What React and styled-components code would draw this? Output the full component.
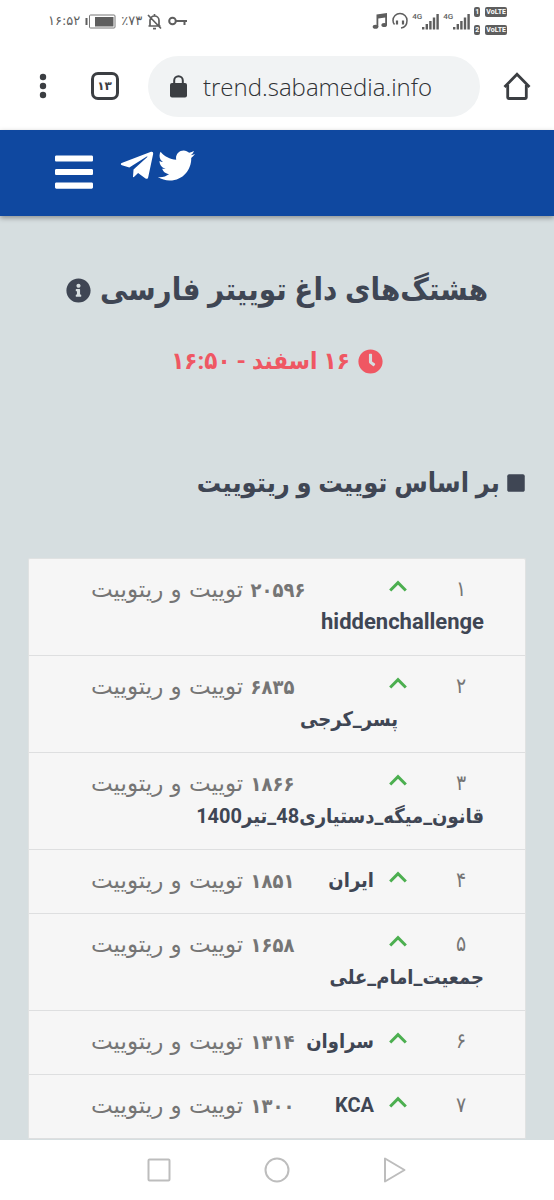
import React from "react";
import styled, { createGlobalStyle } from "styled-components";
import { FaBars, FaTelegramPlane, FaTwitter, FaInfoCircle, FaClock, FaSquare } from "react-icons/fa";

const GlobalStyle = createGlobalStyle`
  * { box-sizing: border-box; }
  body {
    margin: 0;
    background: #d6dee0;
    font-family: Roboto, "DejaVu Sans Condensed", "DejaVu Sans", sans-serif;
    color: #3f4654;
  }
  button { border: 0; padding: 0; background: none; color: inherit; font: inherit; cursor: pointer; }
  a { color: inherit; text-decoration: none; }
  svg { display: block; flex: none; }
`;

const Screen = styled.div`
  display: flex;
  flex-direction: column;
  min-height: 100vh;
`;

const StatusBar = styled.div`
  display: flex;
  justify-content: space-between;
  align-items: center;
  height: 42px;
  padding: 0 47px 0 48px;
  background: #fff;
  color: #5e5e5e;
`;

const StatusGroup = styled.div`
  display: flex;
  align-items: center;
  gap: ${(p) => p.$gap}px;
`;

const StatusText = styled.span`
  font-family: "DejaVu Sans", sans-serif;
  font-size: 13px;
  line-height: 16px;
`;

const Signal = styled.span`
  display: flex;
  align-items: flex-start;
  height: 18px;
`;

const Network = styled.span`
  font-size: 8px;
  font-weight: 500;
  line-height: 10px;
`;

const SimColumn = styled.span`
  display: grid;
  grid-template-columns: auto auto;
  align-items: center;
  gap: 8px 5px;
`;

const Badge = styled.span`
  padding: 0 1px;
  border-radius: 2px;
  background: #5e5e5e;
  color: #fff;
  font-size: 7px;
  font-weight: 700;
  line-height: 10px;
  text-align: center;
`;

const Toolbar = styled.div`
  display: grid;
  grid-template-columns: 86px 37px minmax(0, 1fr) 74px;
  align-items: center;
  justify-items: center;
  height: 88px;
  background: #fff;
  color: #3b3e42;
`;

const TabButton = styled.button`
  width: 28px;
  height: 28px;
  border: 3px solid #3b3e42;
  border-radius: 7px;
  font-family: "DejaVu Sans", sans-serif;
  font-size: 12px;
  font-weight: 700;
  line-height: 20px;
`;

const AddressBar = styled.label`
  display: flex;
  align-items: center;
  gap: 16px;
  justify-self: stretch;
  height: 61px;
  margin-left: 25px;
  padding: 0 22px;
  border-radius: 31px;
  background: #f1f3f4;
`;

const AddressInput = styled.input`
  flex: 1;
  min-width: 0;
  padding: 0;
  border: 0;
  outline: 0;
  background: none;
  color: #2f3134;
  font-family: "Open Sans", "Noto Sans", sans-serif;
  font-size: 24px;
  font-weight: 300;
`;

const SiteHeader = styled.header`
  display: flex;
  align-items: flex-start;
  gap: 27px;
  height: 86px;
  padding: 17px 55px;
  background: #0f48a0;
  color: #fff;
  box-shadow: 0 2px 5px rgba(0, 0, 0, 0.35);
  z-index: 1;
`;

const MenuButton = styled.button`
  padding-top: 3px;
`;

const MenuIcon = styled(FaBars)`
  width: 38px;
  height: 44px;
`;

const SocialLinks = styled.nav`
  display: flex;
  gap: 4px;
`;

const TelegramIcon = styled(FaTelegramPlane)`
  width: 34px;
  height: 37px;
`;

const Main = styled.main`
  flex: 1;
  padding: 49px 28px 1px;
`;

const Title = styled.h1`
  display: flex;
  justify-content: center;
  align-items: center;
  gap: 9px;
  margin: 0;
  font-size: 31px;
  line-height: 50px;
  white-space: nowrap;
`;

const Updated = styled.p`
  display: flex;
  justify-content: center;
  align-items: center;
  gap: 8px;
  margin: 31px 0 87px;
  color: #ef5763;
  font-size: 24px;
  font-weight: 700;
  line-height: 30px;
`;

const SectionTitle = styled.h2`
  display: flex;
  align-items: center;
  gap: 6px;
  margin: 0 0 55px;
  font-size: 27px;
  line-height: 40px;
  white-space: nowrap;
`;

const TrendList = styled.ol`
  margin: 0;
  padding: 0;
  list-style: none;
  border: 1px solid #e0e2e2;
  border-bottom: 0;
  border-radius: 2px;
  background: #f6f6f6;
`;

const TrendRow = styled.li`
  display: grid;
  grid-template-columns: 46px 64px 1fr auto;
  align-items: center;
  padding: 14px 41px 16px 62px;
  border-bottom: 1px solid #dedfe0;
  line-height: 33px;
`;

const Rank = styled.span`
  text-align: center;
  color: #757575;
  font-size: 21px;
`;

const Arrow = styled.svg`
  justify-self: end;
  margin-left: 15px;
  width: 18px;
  height: 12px;
  margin-bottom: 8px;
`;

const TrendName = styled.a`
  grid-row: ${(p) => (p.$wrap ? 2 : 1)};
  grid-column: ${(p) => (p.$wrap ? "1 / -1" : "3")};
  padding-right: ${(p) => (p.$indent ? 86 : 0)}px;
  height: 33px;
  font-size: ${(p) => (p.$large ? 22 : 20)}px;
  line-height: 32px;
  font-weight: 700;
  white-space: nowrap;
`;

const Count = styled.span`
  grid-row: 1;
  grid-column: 4;
  height: 33px;
  color: #757575;
  font-family: "DejaVu Sans", sans-serif;
  font-size: 23px;
  white-space: nowrap;
`;

const CountValue = styled.b`
  font-family: "DejaVu Sans Condensed", "DejaVu Sans", sans-serif;
  font-size: 20px;
`;

const SystemNav = styled.nav`
  display: flex;
  justify-content: center;
  align-items: center;
  gap: 90px;
  height: 60px;
  background: #fff;
  color: #bdbdbd;
`;

const TRENDS = [
  { rank: "۱", name: "hiddenchallenge", count: "۲۰۵۹۶", wrap: true, large: true },
  { rank: "۲", name: "پسر_کرجی", count: "۶۸۳۵", wrap: true, indent: true },
  { rank: "۳", name: "قانون_میگه_دستیاری48_تیر1400", count: "۱۸۶۶", wrap: true },
  { rank: "۴", name: "ایران", count: "۱۸۵۱" },
  { rank: "۵", name: "جمعیت_امام_علی", count: "۱۶۵۸", wrap: true },
  { rank: "۶", name: "سراوان", count: "۱۳۱۴" },
  { rank: "۷", name: "KCA", count: "۱۳۰۰" },
];

function Bars() {
  return (
    <svg width="17" height="18" viewBox="0 0 17 18" fill="currentColor">
      <rect x="0" y="15" width="2.4" height="2.5" />
      <rect x="3.6" y="12" width="2.4" height="5.5" />
      <rect x="7.2" y="9" width="2.4" height="8.5" />
      <rect x="10.8" y="5.5" width="2.4" height="12" />
      <rect x="14.4" y="2" width="2.4" height="15.5" />
    </svg>
  );
}

function Status() {
  return (
    <StatusBar>
      <StatusGroup $gap={5}>
        <StatusText>۱۶:۵۲</StatusText>
        <svg width="31" height="15" viewBox="0 0 31 15">
          <rect x="0.5" y="4" width="2" height="7" fill="#5e5e5e" />
          <rect x="4.5" y="1" width="25.5" height="13" rx="1" fill="none" stroke="#777" />
          <rect x="10" y="3" width="18.5" height="9.5" fill="#5e5e5e" />
        </svg>
        <StatusText>٪۷۳</StatusText>
        <svg width="15" height="17" viewBox="0 0 15 17" fill="none" stroke="currentColor" strokeWidth="1.7">
          <path d="M3 13V7.500C3 4.800 5 3 7.500 3S12 4.800 12 7.500V13M1.500 13h12M7.500 1v2M1 2l13 13.500" />
          <path d="M6 15.600h3" />
        </svg>
        <svg width="21" height="12" viewBox="0 0 21 12" fill="none" stroke="currentColor" strokeWidth="2">
          <circle cx="5.500" cy="6" r="3.300" />
          <path d="M9 6h11M17.500 6v4" />
        </svg>
      </StatusGroup>
      <StatusGroup $gap={4}>
        <svg width="16" height="18" viewBox="0 0 16 18" fill="currentColor">
          <path d="M4.500 2.500 15 1v12h-1.800V5.500L6.300 6.500V15H4.500z" />
          <ellipse cx="3.500" cy="14.800" rx="2.800" ry="2" />
          <ellipse cx="12.200" cy="13" rx="2.800" ry="2" />
        </svg>
        <svg width="16" height="18" viewBox="0 0 16 18" fill="none" stroke="currentColor" strokeWidth="1.500">
          <path d="M2.500 12.500C1 11 1 9.500 1 8.500a7 7 0 0 1 14 0c0 4-1.500 7-6 7.500" />
          <path d="M5 8.500v4M11 8.500v4" strokeWidth="2.200" />
        </svg>
        <Signal><Network>4G</Network><Bars /></Signal>
        <Signal><Network>4G</Network><Bars /></Signal>
        <SimColumn>
          <Badge>1</Badge><Badge>VoLTE</Badge>
          <Badge>2</Badge><Badge>VoLTE</Badge>
        </SimColumn>
      </StatusGroup>
    </StatusBar>
  );
}

function Browser() {
  return (
    <Toolbar>
      <button type="button" aria-label="Menu">
        <svg width="8" height="26" viewBox="0 0 8 26" fill="currentColor">
          <circle cx="4" cy="4" r="3.200" />
          <circle cx="4" cy="13" r="3.200" />
          <circle cx="4" cy="22" r="3.200" />
        </svg>
      </button>
      <TabButton type="button" aria-label="Tabs">۱۳</TabButton>
      <AddressBar>
        <svg width="17" height="23" viewBox="0 0 17 23">
          <rect x="0" y="8" width="17" height="14.500" rx="2" fill="#3b3e42" />
          <path d="M4.200 9V5.500a4.300 4.300 0 0 1 8.600 0V9" fill="none" stroke="#3b3e42" strokeWidth="2" />
        </svg>
        <AddressInput type="text" aria-label="Address" defaultValue="trend.sabamedia.info" />
      </AddressBar>
      <button type="button" aria-label="Home">
        <svg width="28" height="28" viewBox="0 0 28 28" fill="none" stroke="currentColor" strokeWidth="2.800">
          <path d="M1.500 15 14 2.300 26.500 15" />
          <path d="M4.700 13v12.500a1 1 0 0 0 1 1h16.600a1 1 0 0 0 1-1V13" />
        </svg>
      </button>
    </Toolbar>
  );
}

export default function App() {
  return (
    <Screen>
      <GlobalStyle />
      <Status />
      <Browser />
      <SiteHeader>
        <MenuButton type="button" aria-label="منو">
          <MenuIcon />
        </MenuButton>
        <SocialLinks>
          <a href="#telegram" aria-label="Telegram"><TelegramIcon /></a>
          <a href="#twitter" aria-label="Twitter"><FaTwitter size={37} /></a>
        </SocialLinks>
      </SiteHeader>
      <Main dir="rtl" lang="fa">
        <Title>
          هشتگ‌های داغ توییتر فارسی
          <FaInfoCircle size={25} />
        </Title>
        <Updated>
          <FaClock size={25} />
          ۱۶ اسفند - ۱۶:۵۰
        </Updated>
        <SectionTitle>
          <FaSquare size={20} />
          بر اساس توییت و ریتوییت
        </SectionTitle>
        <TrendList>
          {TRENDS.map((t) => (
            <TrendRow key={t.rank}>
              <Rank>{t.rank}</Rank>
              <Arrow viewBox="0 0 18 12" fill="none" stroke="#4caf50" strokeWidth="3">
                <path d="M1.200 10.500 9 2.700l7.800 7.800" />
              </Arrow>
              <TrendName href={"#" + t.name} $wrap={t.wrap} $indent={t.indent} $large={t.large}>{t.name}</TrendName>
              <Count><CountValue>{t.count}</CountValue> توییت و ریتوییت</Count>
            </TrendRow>
          ))}
        </TrendList>
      </Main>
      <SystemNav>
        <button type="button" aria-label="Recent apps">
          <svg width="28" height="28" viewBox="0 0 28 28" fill="none" stroke="currentColor" strokeWidth="2">
            <rect x="3.500" y="3.500" width="21" height="21" rx="1" />
          </svg>
        </button>
        <button type="button" aria-label="Home screen">
          <svg width="28" height="28" viewBox="0 0 28 28" fill="none" stroke="currentColor" strokeWidth="2">
            <circle cx="14" cy="14" r="11.500" />
          </svg>
        </button>
        <button type="button" aria-label="Back">
          <svg width="28" height="28" viewBox="0 0 28 28" fill="none" stroke="currentColor" strokeWidth="2" strokeLinejoin="round">
            <path d="M4 2.500v23L23.500 14z" />
          </svg>
        </button>
      </SystemNav>
    </Screen>
  );
}
